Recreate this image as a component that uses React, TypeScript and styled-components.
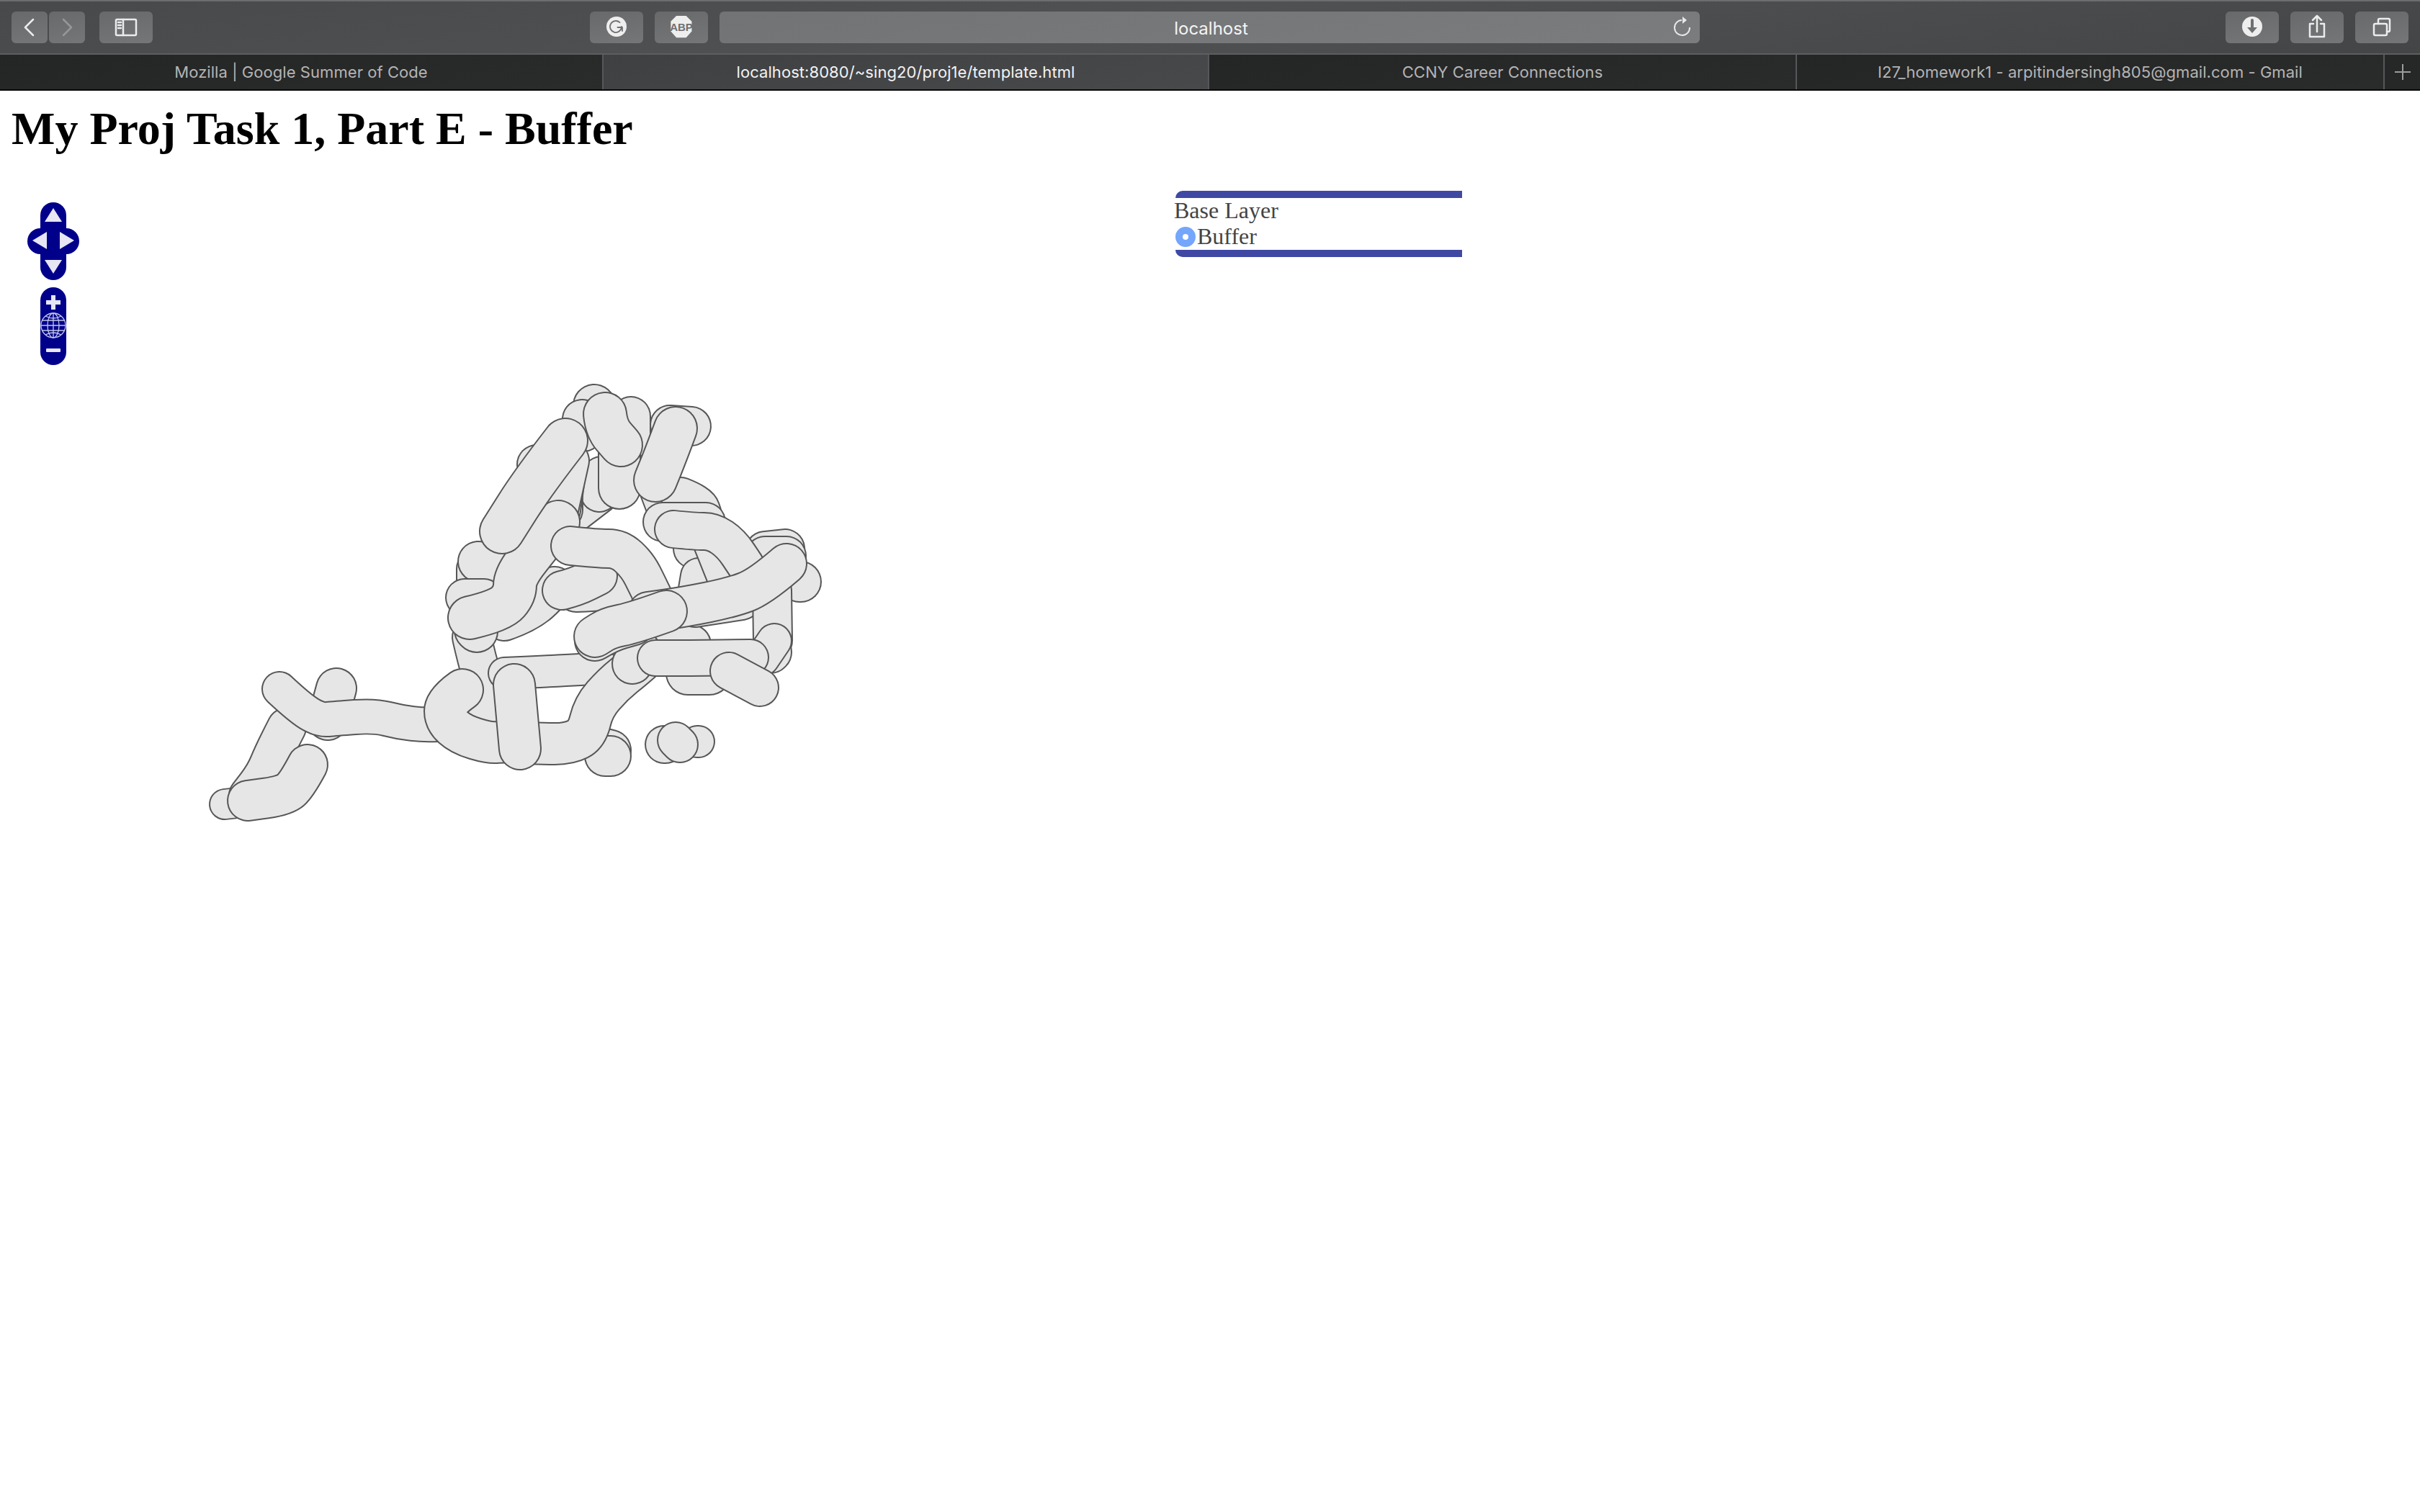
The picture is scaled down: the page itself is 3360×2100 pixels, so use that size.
import styled, { createGlobalStyle } from 'styled-components'

const GlobalStyle = createGlobalStyle`
    html, body {
        margin: 0;
        padding: 0;
        background: #ffffff;
    }
    body {
        font-family: "Liberation Serif", "Times New Roman", serif;
        overflow: hidden;
    }
`

// buffer shapes in page coordinates, back to front
type Band = { pts: number[][], w?: number }

const bands: Band[] = [
    { pts: [[840, 1040], [848, 1042]], w: 54 },
    { pts: [[840, 1050], [848, 1050]], w: 54 },
    { pts: [[670, 985], [672, 950], [662, 915], [655, 885]], w: 52 },
    { pts: [[700, 935], [770, 932], [840, 928]], w: 42 },
    { pts: [[467, 956], [455, 1000]], w: 54 },
    { pts: [[312, 1117], [330, 1115]], w: 40 },
    { pts: [[398, 1010], [380, 1045], [368, 1075], [345, 1105]], w: 52 },
    { pts: [[388, 957], [418, 985], [445, 1000], [465, 998], [520, 994], [555, 1003], [590, 1007], [625, 1005]], w: 46 },
    { pts: [[427, 1062], [412, 1090], [395, 1105], [344, 1112]], w: 54 },
    { pts: [[642, 958], [618, 975], [618, 1000], [640, 1020], [680, 1032], [700, 1030], [750, 1033], [790, 1033], [815, 1020], [824, 982], [851, 951], [882, 926], [905, 905]], w: 56 },
    { pts: [[714, 951], [722, 1040]], w: 56 },
    { pts: [[700, 862], [735, 850], [770, 815]], w: 54 },
    { pts: [[660, 790], [660, 830]], w: 50 },
    { pts: [[660, 875], [662, 877]], w: 56 },
    { pts: [[664, 780], [700, 792]], w: 54 },
    { pts: [[645, 830], [672, 830]], w: 50 },
    { pts: [[880, 845], [920, 870], [960, 895]], w: 52 },
    { pts: [[965, 845], [1030, 835]], w: 50 },
    { pts: [[1062, 765], [1090, 762]], w: 52 },
    { pts: [[1062, 772], [1092, 772]], w: 52 },
    { pts: [[1110, 808], [1112, 808]], w: 54 },
    { pts: [[1072, 820], [1073, 890]], w: 52 },
    { pts: [[1070, 908], [1072, 906]], w: 52 },
    { pts: [[1075, 890], [1058, 915]], w: 46 },
    { pts: [[955, 935], [985, 935]], w: 58 },
    { pts: [[878, 922], [890, 905]], w: 54 },
    { pts: [[915, 680], [930, 720]], w: 52 },
    { pts: [[945, 690], [970, 700], [975, 715]], w: 52 },
    { pts: [[920, 725], [980, 725]], w: 52 },
    { pts: [[962, 760], [962, 762]], w: 52 },
    { pts: [[965, 830], [970, 800]], w: 48 },
    { pts: [[988, 750], [1010, 805]], w: 52 },
    { pts: [[793, 716], [832, 686]], w: 52 },
    { pts: [[835, 660], [832, 685]], w: 50 },
    { pts: [[825, 563], [826, 565]], w: 56 },
    { pts: [[808, 582], [810, 600]], w: 52 },
    { pts: [[876, 578], [876, 610]], w: 52 },
    { pts: [[930, 590], [960, 592]], w: 52 },
    { pts: [[745, 645], [747, 647]], w: 52 },
    { pts: [[780, 642], [781, 708]], w: 54 },
    { pts: [[787, 642], [778, 708]], w: 54 },
    { pts: [[790, 640], [775, 708]], w: 54 },
    { pts: [[652, 858], [695, 848], [715, 825], [715, 800], [750, 755], [775, 725]], w: 58 },
    { pts: [[785, 612], [740, 670], [697, 738]], w: 60 },
    { pts: [[860, 620], [860, 678]], w: 56 },
    { pts: [[840, 575], [842, 595], [862, 618]], w: 58 },
    { pts: [[938, 595], [925, 630], [910, 667]], w: 58 },
    { pts: [[800, 822], [850, 820], [885, 810]], w: 54 },
    { pts: [[780, 820], [800, 815], [830, 800]], w: 52 },
    { pts: [[792, 758], [830, 762], [860, 762], [885, 785], [900, 815], [912, 840]], w: 52 },
    { pts: [[935, 735], [965, 738], [990, 738], [1015, 755], [1035, 785]], w: 50 },
    { pts: [[1092, 783], [1055, 815], [1015, 830], [950, 843], [900, 850]], w: 54 },
    { pts: [[826, 890], [845, 878], [880, 868]], w: 54 },
    { pts: [[925, 849], [880, 865], [845, 872], [826, 884]], w: 56 },
    { pts: [[910, 914], [960, 914], [1042, 913]], w: 48 },
    { pts: [[1012, 932], [1055, 955]], w: 50 },
    { pts: [[922, 1034], [924, 1034]], w: 50 },
    { pts: [[968, 1030], [970, 1030]], w: 42 },
    { pts: [[938, 1028], [944, 1034]], w: 48 },
]

const toPath = (pts: number[][]) => {
    let d = `M${pts[0][0]} ${pts[0][1]}`
    for (let i = 1; i < pts.length - 1; i++) {
        const mx = (pts[i][0] + pts[i + 1][0]) / 2
        const my = (pts[i][1] + pts[i + 1][1]) / 2
        d += ` Q${pts[i][0]} ${pts[i][1]} ${mx} ${my}`
    }
    const last = pts[pts.length - 1]
    return d + ` L${last[0]} ${last[1]}`
}

const tabs = [
    { label: 'Mozilla | Google Summer of Code', width: 838 },
    { label: 'localhost:8080/~sing20/proj1e/template.html', width: 841, active: true },
    { label: 'CCNY Career Connections', width: 816 },
    { label: 'I27_homework1 - arpitindersingh805@gmail.com - Gmail', width: 816 },
]

export default function App() {
    return (
        <Page>
            <GlobalStyle />
            <Toolbar>
                <NavButton>
                    <Icon viewBox="0 0 50 44"><path d="M30 11 19 22 30 33" /></Icon>
                </NavButton>
                <NavButton $gapLeft={2}>
                    <Icon viewBox="0 0 50 44" $dim><path d="M20 11 31 22 20 33" /></Icon>
                </NavButton>
                <WideButton $gapLeft={20}>
                    <Icon viewBox="0 0 74 44">
                        <rect x="23" y="11" width="28" height="22" rx="1.5" />
                        <path d="M33 11V33M26 15H30M26 19H30M26 23H30" />
                    </Icon>
                </WideButton>
                <WideButton $gapLeft={607}>
                    <Icon viewBox="0 0 74 44">
                        <circle cx="37" cy="21" r="14" fill="#eeeeee" stroke="none" />
                        <path d="M44 21a8 8 0 1 1-2.500-5.800M45 22H38.500M45 22V27" stroke="#6e6f71" strokeWidth="1.800" fill="none" />
                    </Icon>
                </WideButton>
                <WideButton $gapLeft={16}>
                    <Icon viewBox="0 0 74 44">
                        <polygon points="30,6 44,6 52,14 52,28 44,37 30,37 22,28 22,14" fill="#eeeeee" stroke="none" transform="translate(1 0) scale(.97 .98)" />
                        <AbpText x="37" y="26.500" textAnchor="middle">ABP</AbpText>
                    </Icon>
                </WideButton>
                <UrlBar>
                    <UrlText>localhost</UrlText>
                    <ReloadIcon viewBox="0 0 28 32">
                        <path d="M12 7a10.500 10.500 0 1 0 11 10" />
                        <path d="M13 2 19 7 13 12Z" fill="#e8e8e8" stroke="none" />
                    </ReloadIcon>
                </UrlBar>
                <Spacer />
                <WideButton>
                    <Icon viewBox="0 0 74 44">
                        <circle cx="37" cy="21" r="14" fill="#eeeeee" stroke="none" />
                        <path d="M37 12V24" stroke="#6e6f71" strokeWidth="4" />
                        <path d="M30 22H44L37 30Z" fill="#6e6f71" stroke="none" />
                    </Icon>
                </WideButton>
                <WideButton $gapLeft={16}>
                    <Icon viewBox="0 0 74 44">
                        <path d="M32 17H27V35H47V17H42M37 28V7M31 12 37 6 43 12" />
                    </Icon>
                </WideButton>
                <WideButton $gapLeft={16}>
                    <Icon viewBox="0 0 74 44">
                        <rect x="26" y="17" width="18" height="16" rx="2" />
                        <path d="M32 17V12a2 2 0 0 1 2-2H46a2 2 0 0 1 2 2V26a2 2 0 0 1-2 2H44" />
                    </Icon>
                </WideButton>
            </Toolbar>

            <TabBar>
                {tabs.map(tab => (
                    <Tab key={tab.label} $width={tab.width} $active={tab.active}>{tab.label}</Tab>
                ))}
                <NewTab>
                    <svg width="24" height="24" viewBox="0 0 24 24">
                        <path d="M12 1V23M1 12H23" stroke="#9c9c9c" strokeWidth="2" />
                    </svg>
                </NewTab>
            </TabBar>

            <Content>
                <Heading>My Proj Task 1, Part E - Buffer</Heading>
                <MapArea>
                    <BufferLayer viewBox="16 250 1300 920">
                        {bands.map((band, i) => (
                            <g key={i}>
                                <BandLine d={toPath(band.pts)} strokeWidth={(band.w ?? 52) + 4} stroke="#565656" />
                                <BandLine d={toPath(band.pts)} strokeWidth={band.w ?? 52} stroke="#e6e6e6" />
                            </g>
                        ))}
                    </BufferLayer>

                    <PanZoom viewBox="0 0 72 226">
                        <g fill="#00008b">
                            <rect x="18" y="0" width="36" height="108" rx="18" />
                            <rect x="0" y="36" width="72" height="36" rx="18" />
                            <rect x="18" y="118" width="36" height="108" rx="18" />
                        </g>
                        <g fill="#e6e6f4">
                            <path d="M36 8 48 27H24Z" />
                            <path d="M7 53 27 41V65Z" />
                            <path d="M65 53 45 41V65Z" />
                            <path d="M36 99 48 80H24Z" />
                            <path d="M33 129H39V136H46V142H39V149H33V142H26V136H33Z" />
                            <rect x="26" y="203" width="20" height="5" rx="1" />
                        </g>
                        <g fill="none" stroke="#c4c6ea" strokeWidth="1.300">
                            <circle cx="36" cy="171" r="17" />
                            <ellipse cx="36" cy="171" rx="8" ry="17" />
                            <path d="M36 154V188M20 164H52M19 171H53M20 178H52M25 158Q36 164 47 158M25 184Q36 178 47 184" />
                        </g>
                    </PanZoom>

                    <LayerSwitcher>
                        <SwitcherBar $top />
                        <LayerRow>Base Layer</LayerRow>
                        <LayerRow><LayerRadio />Buffer</LayerRow>
                        <SwitcherBar />
                    </LayerSwitcher>
                </MapArea>
            </Content>
        </Page>
    )
}

const Page = styled.div`
    width: 3360px;
    height: 2100px;
    background: #ffffff;
    overflow: hidden;
`

const Toolbar = styled.div`
    box-sizing: border-box;
    height: 76px;
    display: flex;
    align-items: center;
    padding: 0 16px;
    border-top: 2px solid #6c6d6f;
    border-bottom: 2px solid #5d5e60;
    background: linear-gradient(172deg, #48494b 0%, #505153 45%, #444547 100%);
`

const NavButton = styled.div<{ $gapLeft?: number }>`
    width: 50px;
    height: 44px;
    margin-left: ${p => p.$gapLeft ?? 0}px;
    border-radius: 6px;
    background: linear-gradient(170deg, #68696b, #757678);
`

const WideButton = styled(NavButton)`
    width: 74px;
`

const Icon = styled.svg<{ $dim?: boolean }>`
    display: block;
    width: 100%;
    height: 100%;
    fill: none;
    stroke: ${p => (p.$dim ? '#969799' : '#ececec')};
    stroke-width: 2.5;
    stroke-linecap: round;
    stroke-linejoin: round;
`

const AbpText = styled.text`
    font-family: "Liberation Sans", Arial, sans-serif;
    font-size: 15px;
    font-weight: 700;
    fill: #6e6f71;
    stroke: none;
`

const UrlBar = styled.div`
    position: relative;
    width: 1361px;
    height: 44px;
    margin-left: 16px;
    display: flex;
    align-items: center;
    justify-content: center;
    border-radius: 6px;
    background: linear-gradient(170deg, #727375, #7b7c7e);
`

const UrlText = styled.span`
    font-family: Inter, "Liberation Sans", sans-serif;
    font-size: 24px;
    color: #f4f4f4;
    margin-left: 4px;
    margin-top: 2px;
`

const ReloadIcon = styled.svg`
    position: absolute;
    right: 9px;
    top: 5px;
    width: 28px;
    height: 32px;
    fill: none;
    stroke: #e8e8e8;
    stroke-width: 2;
`

const Spacer = styled.div`
    flex: 1;
`

const TabBar = styled.div`
    box-sizing: border-box;
    height: 50px;
    display: flex;
    border-bottom: 2px solid #0a0a0a;
    background: #262727;
`

const Tab = styled.div<{ $width: number, $active?: boolean }>`
    box-sizing: border-box;
    flex: 0 0 ${p => p.$width}px;
    display: flex;
    align-items: center;
    justify-content: center;
    border-right: 2px solid #56575a;
    font-family: Inter, "Liberation Sans", sans-serif;
    font-size: 22px;
    letter-spacing: 0.06px;
    color: ${p => (p.$active ? '#f2f2f2' : '#b4b4b4')};
    background: ${p => (p.$active ? 'linear-gradient(170deg, #3f4042, #48494b)' : 'linear-gradient(170deg, #242525, #2a2b2b)')};
`

const NewTab = styled.div`
    flex: 1;
    display: flex;
    align-items: center;
    justify-content: center;
`

const Content = styled.div`
    padding: 0 16px;
`

const Heading = styled.h1`
    margin: 16px 0 0;
    font-family: "Liberation Serif", "Times New Roman", serif;
    font-size: 64px;
    line-height: 74px;
    font-weight: 700;
    color: #000000;
`

const MapArea = styled.div`
    position: relative;
    margin-top: 34px;
    width: 1300px;
    height: 920px;
`

const BufferLayer = styled.svg`
    display: block;
    width: 1300px;
    height: 920px;
`

const BandLine = styled.path`
    fill: none;
    stroke-linecap: round;
    stroke-linejoin: round;
`

const PanZoom = styled.svg`
    position: absolute;
    left: 22px;
    top: 31px;
    width: 72px;
    height: 226px;
`

const LayerSwitcher = styled.div`
    position: absolute;
    left: 1614px;
    top: 15px;
    width: 400px;
`

const SwitcherBar = styled.div<{ $top?: boolean }>`
    height: 10px;
    margin-left: 2px;
    background: #3f49a3;
    border-radius: ${p => (p.$top ? '10px 0 0 0' : '0 0 0 10px')};
`

const LayerRow = styled.div`
    display: flex;
    align-items: center;
    height: 36px;
    font-size: 32px;
    line-height: 35px;
    padding-bottom: 2px;
    box-sizing: border-box;
    color: #444444;
`

const LayerRadio = styled.span`
    box-sizing: border-box;
    width: 28px;
    height: 28px;
    margin: 2px 2px 0;
    border-radius: 50%;
    background: #ffffff;
    border: 10px solid #74a6fb;
`
